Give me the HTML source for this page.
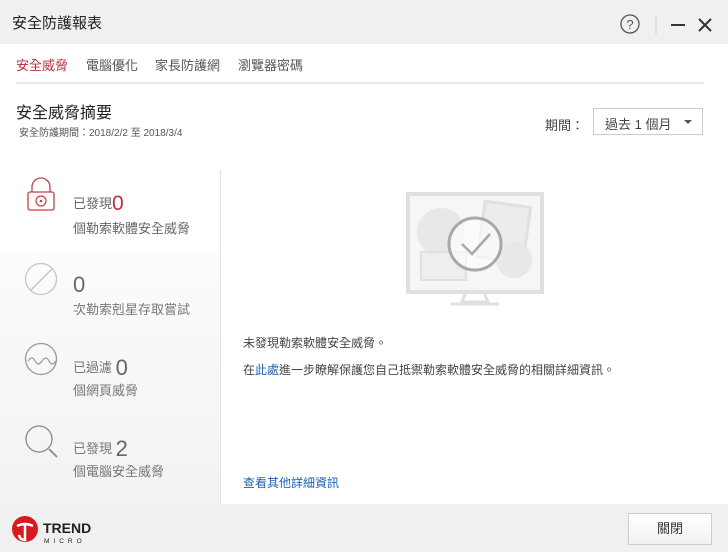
<!DOCTYPE html>
<html><head><meta charset="utf-8"><style>
*{margin:0;padding:0;box-sizing:border-box}
body{width:728px;height:552px;background:#fff;font-family:"Liberation Sans","Noto Sans CJK TC",sans-serif;color:#333;position:relative;overflow:hidden}
.a{position:absolute;white-space:nowrap}
</style></head><body>
<div class="a" style="left:0;top:0;width:728px;height:44px;background:#f0f0f0"></div>
<div class="a" style="left:12px;top:12px;font-size:15px;color:#222">安全防護報表</div>
<svg class="a" style="left:619px;top:12px" width="100" height="24">
<circle cx="11" cy="12" r="9" fill="none" stroke="#555" stroke-width="1.3"/>
<text x="11" y="17" font-size="13" text-anchor="middle" fill="#555" font-family="Liberation Sans">?</text>
<line x1="37" y1="3" x2="37" y2="22" stroke="#ccc"/>
<line x1="52" y1="13" x2="66" y2="13" stroke="#333" stroke-width="2"/>
<path d="M80 7 L92 19 M92 7 L80 19" stroke="#333" stroke-width="2"/>
</svg>
<div class="a" style="left:16px;top:55px;font-size:13px;color:#b5313d">安全威脅</div>
<div class="a" style="left:86px;top:55px;font-size:13px;color:#555">電腦優化</div>
<div class="a" style="left:155px;top:55px;font-size:13px;color:#555">家長防護網</div>
<div class="a" style="left:238px;top:55px;font-size:13px;color:#555">瀏覽器密碼</div>
<div class="a" style="left:16px;top:82px;width:688px;height:2px;background:#e8e8e8"></div>
<div class="a" style="left:16px;top:99px;font-size:16px;color:#222">安全威脅摘要</div>
<div class="a" style="left:19px;top:124px;font-size:10px;color:#555">安全防護期間：2018/2/2 至 2018/3/4</div>
<div class="a" style="left:545px;top:115px;font-size:13px;color:#444">期間：</div>
<div class="a" style="left:593px;top:108px;width:110px;height:27px;border:1px solid #ccc;background:#fff"></div>
<div class="a" style="left:605px;top:114px;font-size:13px;color:#444">過去 1 個月</div>
<svg class="a" style="left:683px;top:119px" width="10" height="6"><path d="M1 1 L9 1 L5 5Z" fill="#555"/></svg>
<div class="a" style="left:0;top:170px;width:221px;height:334px;background:linear-gradient(#fff,#f2f2f2);border-right:1px solid #e4e4e4"></div>
<div class="a" style="left:0;top:170px;width:220px;height:80px;background:#fff"></div>
<svg class="a" style="left:20px;top:176px" width="40" height="40">
<path d="M12 16 V11 a9 9 0 0 1 18 0 V16" fill="none" stroke="#c0404a" stroke-width="1.3"/>
<rect x="8" y="16" width="26" height="18" rx="2" fill="none" stroke="#c0404a" stroke-width="1.3"/>
<circle cx="21" cy="25" r="5" fill="none" stroke="#c0404a" stroke-width="1.2"/>
<circle cx="21" cy="25" r="1.3" fill="#c0404a"/>
</svg>
<div class="a" style="left:73px;top:192px;font-size:13px;color:#666">已發現<span style="font-size:21px;color:#c0303a;vertical-align:-2px">0</span></div>
<div class="a" style="left:73px;top:218px;font-size:13px;color:#666">個勒索軟體安全威脅</div>
<svg class="a" style="left:24px;top:262px" width="36" height="36"><circle cx="17" cy="17" r="15.5" fill="none" stroke="#c4c4c4" stroke-width="1.3"/><line x1="7" y1="28" x2="28" y2="7" stroke="#c4c4c4" stroke-width="1.3"/></svg>
<div class="a" style="left:73px;top:272px;font-size:22px;color:#666">0</div>
<div class="a" style="left:73px;top:299px;font-size:13px;color:#777">次勒索剋星存取嘗試</div>
<svg class="a" style="left:24px;top:342px" width="36" height="36"><circle cx="17" cy="17" r="15.5" fill="none" stroke="#999" stroke-width="1.3"/><path d="M4 19 q4-6 7 0 t7 0 t7 0 t7 0" fill="none" stroke="#999" stroke-width="1.2"/></svg>
<div class="a" style="left:73px;top:355px;font-size:13px;color:#777">已過濾 <span style="font-size:22px;color:#666;vertical-align:-3px">0</span></div>
<div class="a" style="left:73px;top:380px;font-size:13px;color:#777">個網頁威脅</div>
<svg class="a" style="left:24px;top:424px" width="38" height="38"><circle cx="15" cy="15" r="13" fill="none" stroke="#888" stroke-width="1.3"/><line x1="25" y1="25" x2="33" y2="33" stroke="#888" stroke-width="1.8"/></svg>
<div class="a" style="left:73px;top:436px;font-size:13px;color:#777">已發現 <span style="font-size:22px;color:#666;vertical-align:-3px">2</span></div>
<div class="a" style="left:73px;top:461px;font-size:13px;color:#777">個電腦安全威脅</div>
<svg class="a" style="left:406px;top:192px" width="138" height="120">
<rect x="2" y="2" width="134" height="98" fill="#f6f6f6" stroke="#e0e0e0" stroke-width="4"/>
<circle cx="35" cy="40" r="24" fill="#e8e8e8"/>
<rect x="75" y="12" width="46" height="56" fill="#ececec" stroke="#e0e0e0" stroke-width="3" transform="rotate(8 98 40)"/>
<circle cx="108" cy="68" r="18" fill="#e8e8e8"/>
<rect x="15" y="60" width="45" height="28" fill="#eee" stroke="#e0e0e0" stroke-width="2"/>
<circle cx="69" cy="52" r="26" fill="#fff" fill-opacity=".6" stroke="#a8a8a8" stroke-width="3"/>
<path d="M56 52 L66 62 L84 42" fill="none" stroke="#a8a8a8" stroke-width="2.5"/>
<path d="M60 100 L56 110 L82 110 L78 100 M45 112 H93" fill="none" stroke="#e0e0e0" stroke-width="3"/>
</svg>
<div class="a" style="left:243px;top:334px;font-size:12px;color:#444">未發現勒索軟體安全威脅。</div>
<div class="a" style="left:243px;top:361px;font-size:12px;color:#444">在<span style="color:#2060b0">此處</span>進一步瞭解保護您自己抵禦勒索軟體安全威脅的相關詳細資訊。</div>
<div class="a" style="left:243px;top:474px;font-size:12px;color:#2060b0">查看其他詳細資訊</div>
<div class="a" style="left:0;top:504px;width:728px;height:48px;background:#f0f0f0"></div>
<svg class="a" style="left:11px;top:514px" width="90" height="34">
<circle cx="14" cy="15" r="13" fill="#d71920"/>
<path d="M6 12 q8-4 16 0 M14 10 V26 q-5 0-6-5" fill="none" stroke="#fff" stroke-width="2.5"/>
<text x="32" y="19" font-size="14" font-weight="bold" fill="#222" font-family="Liberation Sans">TREND</text>
<text x="33" y="29" font-size="6.5" fill="#222" font-family="Liberation Sans" letter-spacing="4">MICRO</text>
</svg>
<div class="a" style="left:628px;top:513px;width:84px;height:32px;border:1px solid #ccc;background:linear-gradient(#fff,#f2f2f2);text-align:center;line-height:30px;font-size:13px;color:#333">關閉</div>
</body></html>
